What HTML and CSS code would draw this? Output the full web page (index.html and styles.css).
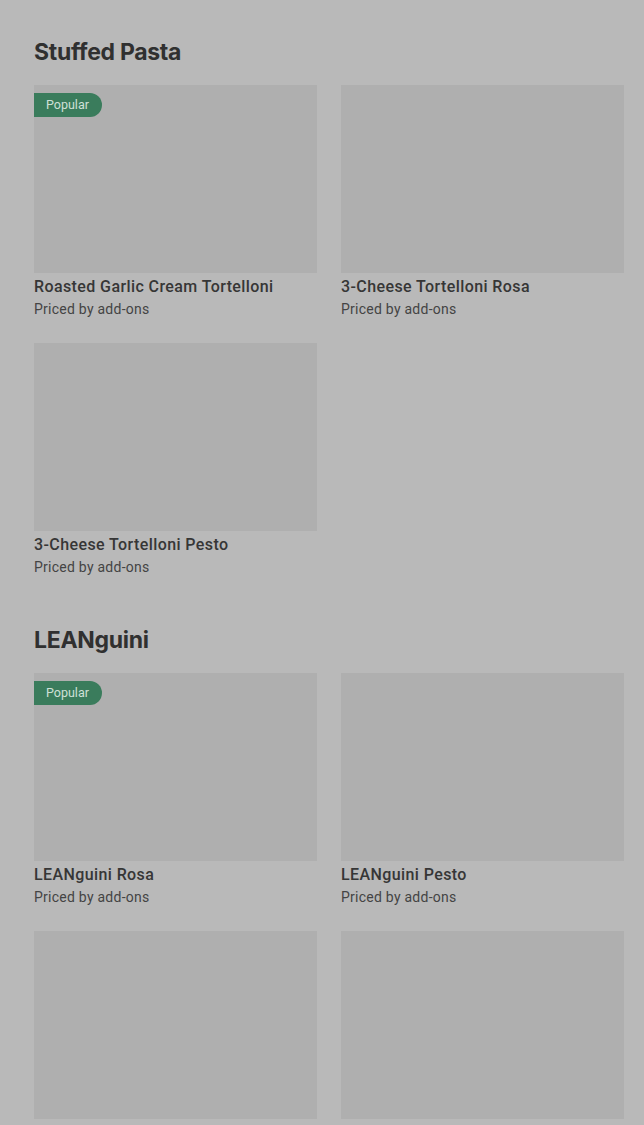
FILE: index.html
```html
<!DOCTYPE html>
<html>
<head>
<meta charset="utf-8">
<link rel="stylesheet" href="styles.css">
</head>
<body>
<main class="page">
  <section class="section">
    <h2 class="section-title">Stuffed Pasta</h2>
    <div class="grid">
      <div class="card">
        <div class="thumb"><span class="badge">Popular</span></div>
        <div class="name">Roasted Garlic Cream Tortelloni</div>
        <div class="price">Priced by add-ons</div>
      </div>
      <div class="card">
        <div class="thumb"></div>
        <div class="name">3-Cheese Tortelloni Rosa</div>
        <div class="price">Priced by add-ons</div>
      </div>
      <div class="card">
        <div class="thumb"></div>
        <div class="name">3-Cheese Tortelloni Pesto</div>
        <div class="price">Priced by add-ons</div>
      </div>
    </div>
  </section>
  <section class="section">
    <h2 class="section-title">LEANguini</h2>
    <div class="grid">
      <div class="card">
        <div class="thumb"><span class="badge">Popular</span></div>
        <div class="name">LEANguini Rosa</div>
        <div class="price">Priced by add-ons</div>
      </div>
      <div class="card">
        <div class="thumb"></div>
        <div class="name">LEANguini Pesto</div>
        <div class="price">Priced by add-ons</div>
      </div>
      <div class="card">
        <div class="thumb"></div>
        <div class="name">LEANguini Alfredo</div>
        <div class="price">Priced by add-ons</div>
      </div>
      <div class="card">
        <div class="thumb"></div>
        <div class="name">LEANguini Roasted Garlic Cream</div>
        <div class="price">Priced by add-ons</div>
      </div>
    </div>
  </section>
</main>
</body>
</html>
```

FILE: styles.css
```css
html, body {
  margin: 0;
  padding: 0;
  background: #b9b9b9;
  overflow: hidden;
}
body {
  font-family: Inter, "Liberation Sans", sans-serif;
  color: #333333;
}
.page {
  padding: 36px 20px 0 34px;
  display: flex;
  flex-direction: column;
  gap: 47px;
}
.section-title {
  margin: 0 0 17px 0;
  font-size: 23px;
  line-height: 32px;
  font-weight: 700;
  letter-spacing: -0.3px;
  color: #303030;
}
.grid {
  display: grid;
  grid-template-columns: 283px 283px;
  column-gap: 24px;
  row-gap: 24px;
}
.card {
  display: flex;
  flex-direction: column;
}
.thumb {
  position: relative;
  height: 188px;
  background: #afafaf;
}
.badge {
  position: absolute;
  left: 0;
  top: 8px;
  height: 24px;
  line-height: 24px;
  padding: 0 13px 0 12px;
  background: #3a7c5c;
  color: #cfe0d7;
  font-family: Roboto, "Liberation Sans", sans-serif;
  font-size: 12.5px;
  border-radius: 0 12px 12px 0;
}
.name {
  margin-top: 4px;
  font-family: Roboto, "Liberation Sans", sans-serif;
  font-size: 16px;
  line-height: 20px;
  font-weight: 500;
  letter-spacing: 0.4px;
  color: #363636;
}
.price {
  margin-top: 2px;
  font-family: Roboto, "Liberation Sans", sans-serif;
  font-size: 14px;
  line-height: 20px;
  letter-spacing: 0.25px;
  color: #444444;
}
```
